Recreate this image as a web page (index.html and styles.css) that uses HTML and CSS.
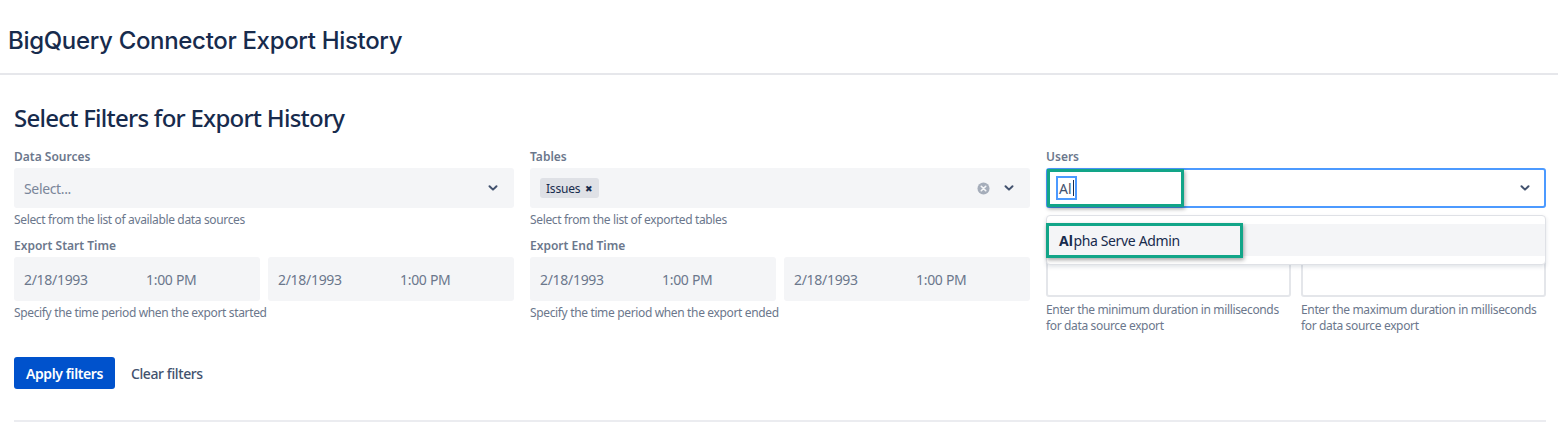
FILE: index.html
```html
<!DOCTYPE html>
<html lang="en">
<head>
<meta charset="utf-8">
<title>BigQuery Connector Export History</title>
<link rel="stylesheet" href="styles.css">
</head>
<body>
<header class="page-header">
  <h1 class="page-title">BigQuery Connector Export History</h1>
</header>
<main class="content">
  <h2 class="section-title">Select Filters for Export History</h2>
  <div class="filters">
    <div class="field">
      <div class="label">Data Sources</div>
      <div class="select">
        <span class="placeholder">Select...</span>
        <span class="indicators">
          <svg class="chevron" width="10" height="8" viewBox="0 0 10 8"><path d="M1.5 2.2 L5 5.6 L8.5 2.2" fill="none" stroke="#42526E" stroke-width="2" stroke-linecap="round" stroke-linejoin="round"/></svg>
        </span>
      </div>
      <div class="helper">Select from the list of available data sources</div>
    </div>
    <div class="field">
      <div class="label">Tables</div>
      <div class="select">
        <span class="tag">Issues <span class="tag-x">&#x2716;</span></span>
        <span class="indicators">
          <svg class="clear" width="13" height="13" viewBox="0 0 14 14"><circle cx="7" cy="7" r="6.5" fill="#A5ADBA"/><path d="M4.6 4.6 L9.4 9.4 M9.4 4.6 L4.6 9.4" stroke="#F4F5F7" stroke-width="1.8" stroke-linecap="round"/></svg>
          <svg class="chevron" width="10" height="8" viewBox="0 0 10 8"><path d="M1.5 2.2 L5 5.6 L8.5 2.2" fill="none" stroke="#42526E" stroke-width="2" stroke-linecap="round" stroke-linejoin="round"/></svg>
        </span>
      </div>
      <div class="helper">Select from the list of exported tables</div>
    </div>
    <div class="field users-field">
      <div class="label">Users</div>
      <div class="select focused">
        <span class="typed"><span class="typed-text">Al</span><span class="caret"></span></span>
        <span class="indicators">
          <svg class="chevron" width="10" height="8" viewBox="0 0 10 8"><path d="M1.5 2.2 L5 5.6 L8.5 2.2" fill="none" stroke="#42526E" stroke-width="2" stroke-linecap="round" stroke-linejoin="round"/></svg>
        </span>
      </div>
      <div class="helper-space"></div>
      <div class="menu">
        <div class="option"><span class="match">Al</span><span class="rest">pha Serve Admin</span></div>
      </div>
      <div class="mark mark-input"></div>
      <div class="mark mark-option"></div>
    </div>

    <div class="field">
      <div class="label">Export Start Time</div>
      <div class="pair">
        <div class="datebox"><span class="date">2/18/1993</span><span>1:00 PM</span></div>
        <div class="datebox"><span class="date">2/18/1993</span><span>1:00 PM</span></div>
      </div>
      <div class="helper">Specify the time period when the export started</div>
    </div>
    <div class="field">
      <div class="label">Export End Time</div>
      <div class="pair">
        <div class="datebox"><span class="date">2/18/1993</span><span>1:00 PM</span></div>
        <div class="datebox"><span class="date">2/18/1993</span><span>1:00 PM</span></div>
      </div>
      <div class="helper">Specify the time period when the export ended</div>
    </div>
    <div class="field">
      <div class="label-space"></div>
      <div class="pair duration-pair">
        <div class="duration">
          <div class="numbox"></div>
          <div class="helper">Enter the minimum duration in milliseconds for data source export</div>
        </div>
        <div class="duration">
          <div class="numbox"></div>
          <div class="helper">Enter the maximum duration in milliseconds for data source export</div>
        </div>
      </div>
    </div>
  </div>
  <div class="actions">
    <button class="btn btn-primary">Apply filters</button>
    <button class="btn btn-subtle">Clear filters</button>
  </div>
  <hr class="divider">
</main>
</body>
</html>
```
FILE: styles.css
```css
* { box-sizing: border-box; }
body {
  margin: 0;
  background: #fff;
  color: #172B4D;
  font-family: "Noto Sans", "Open Sans", sans-serif;
  overflow: hidden;
}
.page-header {
  height: 75px;
  border-bottom: 2px solid #E6E7EB;
  padding: 26px 0 0 8px;
}
.page-title {
  margin: 0;
  font-family: Inter, "Liberation Sans", sans-serif;
  font-size: 24px;
  font-weight: 500;
  line-height: 30px;
  color: #172B4D;
  letter-spacing: -0.32px;
}
.content {
  padding: 0 12px 0 14px;
}
.section-title {
  margin: 27px 0 15px;
  font-size: 24px;
  font-weight: 500;
  line-height: 32px;
  color: #172B4D;
  letter-spacing: -0.75px;
}
.filters {
  display: grid;
  grid-template-columns: repeat(3, 1fr);
  column-gap: 16px;
  row-gap: 10px;
  align-items: start;
}
.field { position: relative; }
.label {
  font-size: 12px;
  font-weight: 600;
  line-height: 16px;
  color: #6B778C;
  margin-bottom: 3px;
}
.label-space { height: 16px; margin-bottom: 3px; }
.helper-space { height: 16px; margin-top: 4px; }
.select {
  height: 40px;
  background: #F4F5F7;
  border: 2px solid #F4F5F7;
  border-radius: 3px;
  display: flex;
  align-items: center;
  padding: 0 8px;
}
.placeholder {
  color: #7A869A;
  font-size: 14px;
  letter-spacing: -0.35px;
  flex: 1;
}
.indicators {
  margin-left: auto;
  display: flex;
  align-items: center;
  gap: 14px;
  padding-right: 6px;
}
.chevron { display: block; }
.clear { display: block; }
.tag {
  display: inline-flex;
  align-items: center;
  height: 20px;
  background: #DFE1E6;
  border-radius: 3px;
  padding: 0 6px 0 6px;
  font-size: 12px;
  letter-spacing: -0.2px;
  color: #172B4D;
  gap: 5px;
}
.tag-x { font-size: 9px; color: #172B4D; }
.select.focused {
  background: #fff;
  border-color: #4C9AFF;
}
.typed {
  display: inline-flex;
  align-items: center;
  border: 2px solid #4C9AFF;
  height: 24px;
  padding: 0 1px;
  font-size: 14px;
  color: #42526E;
}
.caret {
  display: inline-block;
  width: 1px;
  height: 16px;
  background: #172B4D;
  margin-left: 1px;
}
.helper {
  margin-top: 4px;
  font-size: 12px;
  line-height: 16px;
  color: #6B778C;
  letter-spacing: -0.35px;
}
.pair {
  display: flex;
  gap: 8px;
}
.datebox {
  flex: 1;
  height: 44px;
  background: #F4F5F7;
  border-radius: 3px;
  display: flex;
  align-items: center;
  padding-left: 10px;
  font-size: 14px;
  letter-spacing: -0.3px;
  color: #6B778C;
}
.datebox .date { width: 122px; }
.duration-pair { gap: 10px; }
.duration { flex: 1; }
.numbox {
  height: 40px;
  border: 2px solid #E4E6EA;
  border-radius: 3px;
  background: #fff;
}
.duration .helper { margin-top: 5px; }
.menu {
  position: absolute;
  left: 0;
  right: 0;
  top: 66px;
  background: #fff;
  border: 1px solid #DFE1E6;
  border-radius: 4px;
  box-shadow: 0 2px 4px rgba(9,30,66,0.12);
  padding: 8px 0;
  z-index: 2;
}
.option {
  height: 32px;
  background: #F4F5F7;
  display: flex;
  align-items: center;
  padding-left: 12px;
  font-size: 14px;
  color: #172B4D;
  white-space: pre;
}
.option .match { font-weight: 700; letter-spacing: 0; margin-right: 0.5px; }
.option .rest { letter-spacing: -0.35px; }
.mark {
  position: absolute;
  border: 3px solid #12A588;
  box-shadow: 1px 2px 4px rgba(0,0,0,0.35);
  z-index: 3;
}
.mark-input { left: 1px; top: 20px; width: 137px; height: 38px; }
.mark-option { left: 0; top: 74px; width: 197px; height: 35px; }
.actions {
  display: flex;
  gap: 4px;
  margin-top: 23px;
}
.btn {
  font-family: inherit;
  font-size: 14px;
  font-weight: 600;
  letter-spacing: -0.4px;
  height: 32px;
  border: none;
  border-radius: 3px;
  padding: 0 12px;
  cursor: pointer;
}
.btn-primary { background: #0052CC; color: #fff; }
.btn-subtle { background: transparent; color: #42526E; font-weight: 500; }
.divider {
  margin: 31px 0 0;
  border: none;
  border-top: 2px solid #EBECF0;
}
```
